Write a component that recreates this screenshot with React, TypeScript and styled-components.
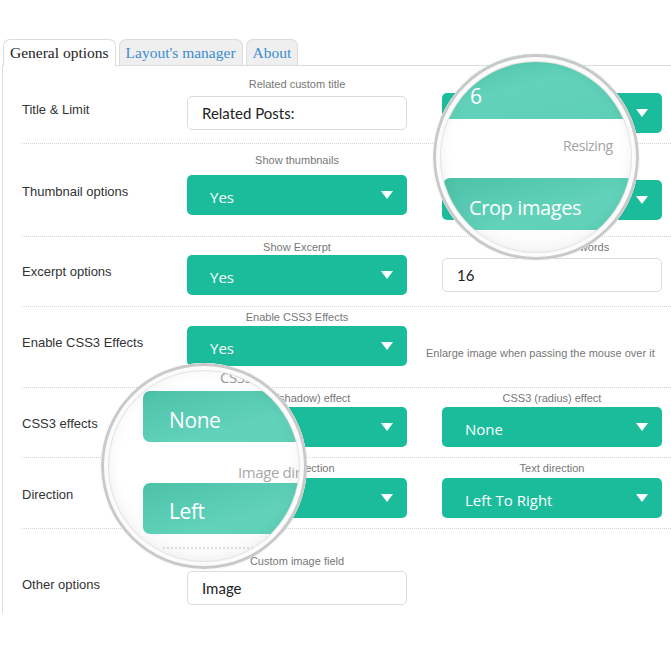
import styled, { createGlobalStyle } from "styled-components";

const GlobalStyle = createGlobalStyle`
  html, body {
    margin: 0;
    padding: 0;
    background: #fff;
  }
  body {
    font-family: "Liberation Sans", Arial, sans-serif;
  }
`;

const Page = styled.div`
  position: relative;
  width: 671px;
  height: 646px;
  padding-top: 39px;
  box-sizing: border-box;
  overflow: hidden;
`;

const Tabs = styled.div`
  display: flex;
  gap: 3px;
  margin-left: 3px;
  position: relative;
  z-index: 1;
`;

const Tab = styled.div<{ $active?: boolean }>`
  box-sizing: border-box;
  padding: 0 6px;
  display: flex;
  align-items: center;
  font-family: "Liberation Serif", Georgia, serif;
  font-size: 15.5px;
  color: ${(p) => (p.$active ? "#222" : "#3b8dd0")};
  background: ${(p) => (p.$active ? "#fff" : "#efefef")};
  border: 1px solid #dcdcdc;
  border-bottom: none;
  border-radius: 7px 7px 0 0;
  height: ${(p) => (p.$active ? "27px" : "26px")};
  margin-bottom: ${(p) => (p.$active ? "-1px" : "0")};
`;

const Panel = styled.div`
  margin-left: 2px;
  border-left: 1px solid #dcdcdc;
  border-top: 1px solid #dcdcdc;
  height: 548px;
  box-sizing: border-box;
`;

const Label = styled.div`
  width: 165px;
  flex-shrink: 0;
  height: 40px;
  padding-bottom: 8px;
  box-sizing: border-box;
  display: flex;
  align-items: center;
  font-size: 13px;
  color: #333;
`;

const Caption = styled.div`
  height: 14px;
  line-height: 14px;
  font-size: 11px;
  color: #777;
  text-align: center;
  white-space: nowrap;
`;

const Row = styled.div<{ $pt: number; $gap: number; $pb: number; $last?: boolean }>`
  display: flex;
  align-items: flex-start;
  margin-left: 19px;
  padding: ${(p) => p.$pt}px 0 ${(p) => p.$pb}px;
  border-bottom: ${(p) => (p.$last ? "none" : "1px dotted #d4d4d4")};

  ${Caption} {
    margin-bottom: ${(p) => p.$gap}px;
  }
  ${Label} {
    margin-top: ${(p) => 14 + p.$gap}px;
  }
`;

const Fields = styled.div`
  display: flex;
  gap: 35px;
  align-items: flex-start;
`;

const Field = styled.div<{ $shift?: number }>`
  width: 220px;
  display: flex;
  flex-direction: column;
  margin-top: ${(p) => p.$shift ?? 0}px;
`;

const Slot = styled.div`
  height: 40px;
  display: flex;
  align-items: center;
`;

const Select = styled.div`
  width: 100%;
  height: 40px;
  box-sizing: border-box;
  background: #1bbc9b;
  border-radius: 5px;
  display: flex;
  align-items: center;
  justify-content: space-between;
  padding: 4px 14px 0 23px;
  font-family: "Open Sans", sans-serif;
  font-size: 15px;
  color: #fff;

  &::after {
    content: "";
    margin-top: -4px;
    border-left: 6px solid transparent;
    border-right: 6px solid transparent;
    border-top: 8px solid #fff;
  }
`;

const Input = styled.div`
  width: 100%;
  height: 34px;
  box-sizing: border-box;
  border: 1px solid #dcdcdc;
  border-radius: 5px;
  background: #fff;
  display: flex;
  align-items: center;
  padding-left: 14px;
  font-family: Lato, sans-serif;
  font-size: 15px;
  color: #222;
`;

const Note = styled.div`
  margin-left: -16px;
  margin-top: 36px;
  font-size: 11px;
  line-height: 14px;
  color: #777;
  white-space: nowrap;
`;

const Lens = styled.div<{ $x: number; $y: number }>`
  position: absolute;
  left: ${(p) => p.$x}px;
  top: ${(p) => p.$y}px;
  width: 206px;
  height: 206px;
  border-radius: 50%;
  overflow: hidden;
  box-sizing: border-box;
  background: radial-gradient(circle at 50% 40%, #ffffff 55%, #f1f1f1 100%);
  box-shadow: 0 0 2px rgba(0, 0, 0, 0.1);
  z-index: 5;

  &::after {
    content: "";
    position: absolute;
    inset: 0;
    border-radius: 50%;
    box-shadow: inset 0 0 0 3px #c9c9c9, inset 0 0 0 7px #fbfbfb,
      inset 0 0 0 8px #e3e3e3, inset 0 0 14px 8px rgba(0, 0, 0, 0.05);
  }
`;

const LensBar = styled.div<{ $top: number; $left: number; $h: number }>`
  position: absolute;
  top: ${(p) => p.$top}px;
  left: ${(p) => p.$left}px;
  width: 320px;
  height: ${(p) => p.$h}px;
  border-radius: 7px;
  background: linear-gradient(165deg, #4cc2a7 0%, #62d2ba 45%, #5ccdb5 100%);
`;

const LensText = styled.div<{ $top: number; $left: number; $size: number; $color: string }>`
  position: absolute;
  top: ${(p) => p.$top}px;
  left: ${(p) => p.$left}px;
  font-family: "Open Sans", sans-serif;
  font-size: ${(p) => p.$size}px;
  letter-spacing: -0.4px;
  line-height: 1.2;
  color: ${(p) => p.$color};
  white-space: nowrap;
`;

const LensDots = styled.div`
  position: absolute;
  top: 184px;
  left: 62px;
  width: 90px;
  border-top: 2px dotted #dedede;
`;

const SelectField = ({ caption, value, shift }: { caption: string; value: string; shift?: number }) => (
  <Field $shift={shift}>
    <Caption>{caption}</Caption>
    <Slot>
      <Select>{value}</Select>
    </Slot>
  </Field>
);

const InputField = ({ caption, value }: { caption: string; value: string }) => (
  <Field>
    <Caption>{caption}</Caption>
    <Slot>
      <Input>{value}</Input>
    </Slot>
  </Field>
);

export default function App() {
  return (
    <Page>
      <GlobalStyle />
      <Tabs>
        <Tab $active>General options</Tab>
        <Tab>Layout's manager</Tab>
        <Tab>About</Tab>
      </Tabs>
      <Panel>
        <Row $pt={11} $gap={2} $pb={10}>
          <Label>Title &amp; Limit</Label>
          <Fields>
            <InputField caption="Related custom title" value="Related Posts:" />
            <SelectField caption="Limit" value="6" />
          </Fields>
        </Row>
        <Row $pt={9} $gap={8} $pb={16}>
          <Label>Thumbnail options</Label>
          <Fields>
            <SelectField caption="Show thumbnails" value="Yes" />
            <SelectField caption="Resizing" value="Crop images" shift={5} />
          </Fields>
        </Row>
        <Row $pt={3} $gap={1} $pb={11}>
          <Label>Excerpt options</Label>
          <Fields>
            <SelectField caption="Show Excerpt" value="Yes" />
            <InputField caption="Excerpt length in words" value="16" />
          </Fields>
        </Row>
        <Row $pt={3} $gap={2} $pb={21}>
          <Label>Enable CSS3 Effects</Label>
          <Fields>
            <SelectField caption="Enable CSS3 Effects" value="Yes" />
            <Note>Enlarge image when passing the mouse over it</Note>
          </Fields>
        </Row>
        <Row $pt={3} $gap={2} $pb={10}>
          <Label>CSS3 effects</Label>
          <Fields>
            <SelectField caption="CSS3 (shadow) effect" value="None" />
            <SelectField caption="CSS3 (radius) effect" value="None" />
          </Fields>
        </Row>
        <Row $pt={3} $gap={3} $pb={10}>
          <Label>Direction</Label>
          <Fields>
            <SelectField caption="Image direction" value="Left" />
            <SelectField caption="Text direction" value="Left To Right" />
          </Fields>
        </Row>
        <Row $pt={25} $gap={0} $pb={5} $last>
          <Label>Other options</Label>
          <Fields>
            <InputField caption="Custom image field" value="Image" />
          </Fields>
        </Row>
      </Panel>

      <Lens $x={433} $y={54}>
        <LensBar $top={-20} $left={0} $h={85} />
        <LensText $top={30} $left={37} $size={21} $color="#fff">6</LensText>
        <LensText $top={84} $left={130} $size={14} $color="#a3a3a3">Resizing</LensText>
        <LensBar $top={124} $left={10} $h={52} />
        <LensText $top={142} $left={36} $size={20} $color="#fff">Crop images</LensText>
      </Lens>

      <Lens $x={101} $y={363}>
        <LensText $top={5} $left={119} $size={15} $color="#9a9a9a">CSS3</LensText>
        <LensBar $top={28} $left={42} $h={51} />
        <LensText $top={45} $left={68} $size={21} $color="#fff">None</LensText>
        <LensText $top={100} $left={137} $size={15} $color="#a8a8a8">Image direction</LensText>
        <LensBar $top={120} $left={42} $h={51} />
        <LensText $top={136} $left={68} $size={21} $color="#fff">Left</LensText>
        <LensDots />
      </Lens>
    </Page>
  );
}
